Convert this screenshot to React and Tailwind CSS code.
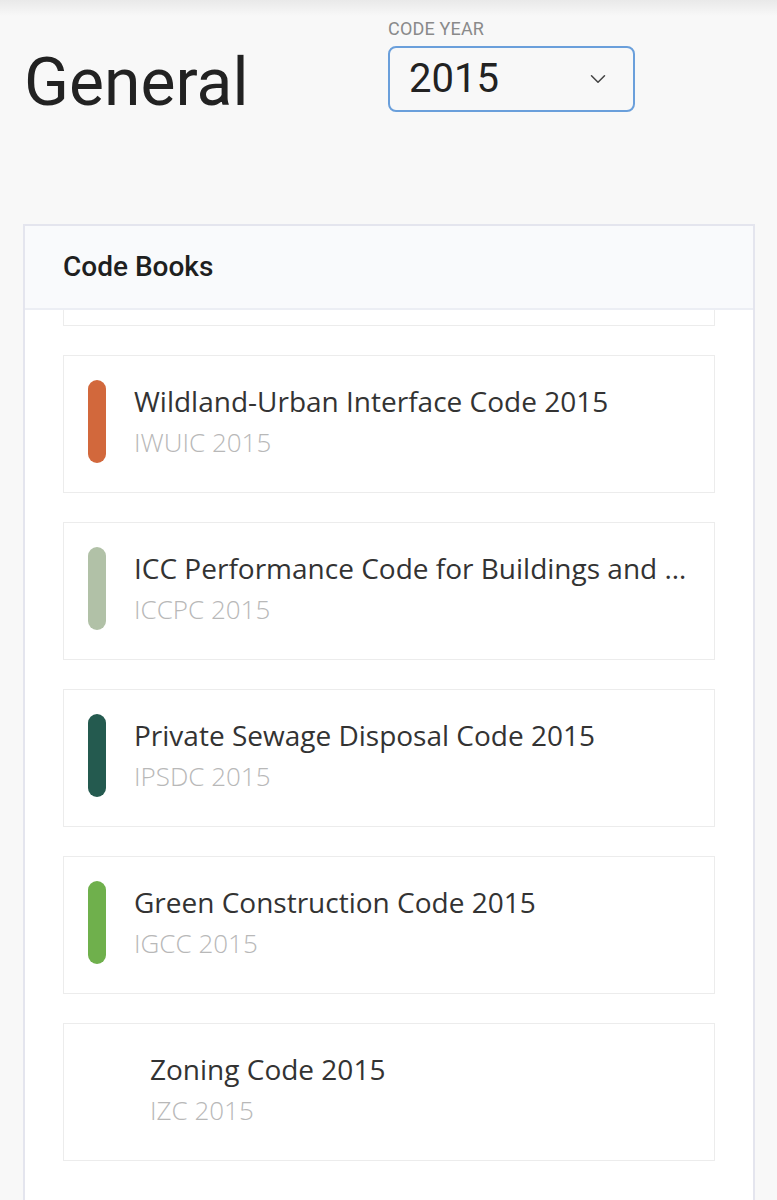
import { ChevronDown } from 'lucide-react'

const books = [
    { title: 'Wildland-Urban Interface Code 2015', code: 'IWUIC 2015', color: 'bg-[#d2683c]' },
    { title: 'ICC Performance Code for Buildings and …', code: 'ICCPC 2015', color: 'bg-[#b1c1a7]' },
    { title: 'Private Sewage Disposal Code 2015', code: 'IPSDC 2015', color: 'bg-[#245a4f]' },
    { title: 'Green Construction Code 2015', code: 'IGCC 2015', color: 'bg-[#6fb04c]' },
    { title: 'Zoning Code 2015', code: 'IZC 2015', color: null },
]

const BookRow = ({ book }) => (
    <div className="flex items-start h-[138px] bg-white border border-[#ececec] pl-[24px] pr-[20px] pt-[24px]">
        {book.color ? (
            <div className={`w-[18px] h-[83px] rounded-full flex-shrink-0 ${book.color}`}></div>
        ) : (
            <div className="w-[18px] h-[83px] flex-shrink-0 mr-[16px]"></div>
        )}
        <div className="ml-[28px] min-w-0 flex-1 pt-[3px] font-['Open_Sans',sans-serif]">
            <p className="text-[28px] leading-[36px] text-[#333333] whitespace-nowrap overflow-hidden">{book.title}</p>
            <p className="text-[26px] leading-[34px] font-light text-[#b8b8b8] mt-[6px]">{book.code}</p>
        </div>
    </div>
)

export default function App() {
    return (
        <div className="min-h-[1200px] bg-[#f8f8f8] font-['Roboto',sans-serif] overflow-hidden">
            {/* top shade */}
            <div className="h-[16px] bg-gradient-to-b from-[#e9e9e9] to-[#f8f8f8]"></div>

            {/* Title + year picker */}
            <div className="flex items-start">
                <h1 className="w-[388px] pl-[24px] pt-[27px] text-[66px] leading-[80px] text-[#222222]">General</h1>
                <div className="flex flex-col">
                    <span className="text-[18px] leading-[22px] text-[#8a8a8a] uppercase mt-[2px] tracking-[0.01em]">Code Year</span>
                    <div className="mt-[6px] w-[247px] h-[66px] rounded-[8px] border-2 border-[#6a9fdb] bg-[#f8f8f8] flex items-center justify-between pl-[19px] pr-[22px]">
                        <span className="text-[40px] leading-[48px] text-[#222222]">2015</span>
                        <ChevronDown className="w-[26px] h-[26px] text-[#444444]" strokeWidth={1.4} />
                    </div>
                </div>
            </div>

            {/* Code Books card */}
            <div className="mt-[101px] ml-[23px] w-[732px] border-2 border-[#e4e5ee] border-b-0 bg-white">
                <div className="h-[84px] bg-[#f9fafc] border-b-2 border-[#eceef4] flex items-center pl-[38px]">
                    <h2 className="text-[28px] font-medium text-[#1f1f1f] leading-none">Code Books</h2>
                </div>
                <div className="px-[38px] flex flex-col gap-[29px] pb-[40px]">
                    <div className="h-[16px] border border-t-0 border-[#ececec]"></div>
                    {books.map((book) => (
                        <BookRow key={book.code} book={book} />
                    ))}
                </div>
            </div>
        </div>
    )
}
